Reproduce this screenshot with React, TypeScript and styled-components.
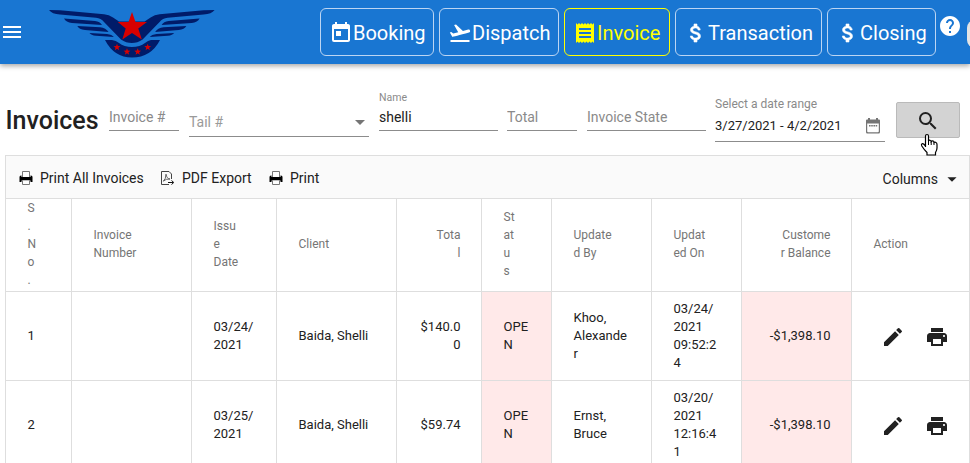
import styled, { createGlobalStyle, css } from 'styled-components'
import { FC, ReactNode, useState, ChangeEvent } from 'react'
import {
    MdArrowDropDown,
    MdAttachMoney,
    MdEdit,
    MdFlightTakeoff,
    MdHelp,
    MdMenu,
    MdPrint,
    MdReceipt,
    MdSearch,
    MdToday
} from 'react-icons/md'

const GlobalStyle = createGlobalStyle`
  * {
    box-sizing: border-box;
  }

  body {
    margin: 0;
    overflow: hidden;
    background: #fff;
    color: #212121;
    font-family: Roboto, 'Liberation Sans', sans-serif;
    font-size: 14px;
  }
`

const Page = styled.div`
  width: 970px;
  height: 463px;
  overflow: hidden;
`

const Header = styled.header`
  position: relative;
  display: flex;
  height: 64px;
  background: #1976d2;
  box-shadow: 0 2px 5px rgba(0, 0, 0, 0.35);
  color: #fff;
`

const MenuButton = styled.div`
  display: flex;
  flex: none;
  align-items: center;
  width: 49px;
`

const LogoBox = styled.div`
  flex: none;
  width: 271px;
  padding-top: 9px;
`

const Nav = styled.nav`
  display: flex;
  flex: none;
  gap: 5px;
  padding: 8px 0;
`

const NavButton = styled.a<{ $active?: boolean; $width: number }>`
  display: flex;
  align-items: center;
  width: ${({ $width }) => $width}px;
  height: 48px;
  padding: 2px 8px 0;
  border: 1px solid ${({ $active }) => ($active ? '#ffff00' : '#bcd5f3')};
  border-radius: 6px;
  color: ${({ $active }) => ($active ? '#ffff00' : '#fff')};
  font-size: 20px;
  white-space: nowrap;

  svg {
    flex: none;
  }
`

const DollarIcon = styled(MdAttachMoney)`
  path:last-child {
    stroke: currentColor;
    stroke-width: 0.6px;
  }
`

const Help = styled.div`
  display: flex;
  flex: none;
  width: 31px;
  padding: 14px 0 0 2px;

  svg {
    flex: none;
  }
`

const Avatar = styled.div`
  flex: none;
  width: 36px;
  height: 28px;
  margin-top: 20px;
  border-radius: 8px;
  background: #e4e4e4;
`

const Filters = styled.div`
  display: flex;
  align-items: flex-start;
  height: 91px;
  padding-left: 5px;
`

const Title = styled.h1`
  width: 104px;
  margin: 42px 0 0;
  padding-left: 0.5px;
  font-size: 25px;
  font-weight: 500;
  line-height: 30px;
`

const Field = styled.div<{ $width: number; $height: number; $gap: number }>`
  display: flex;
  flex-direction: column;
  justify-content: flex-end;
  flex: none;
  width: ${({ $width }) => $width}px;
  height: ${({ $height }) => $height}px;
  margin-right: ${({ $gap }) => $gap}px;
  border-bottom: 1px solid #8c8c8c;
`

const Label = styled.label<{ $size: number; $bottom?: number }>`
  margin-bottom: ${({ $bottom }) => $bottom || 0}px;
  color: #8a8a8a;
  font-size: ${({ $size }) => $size}px;
  line-height: 14px;
`

const inputText = css`
  color: #212121;
  font-family: inherit;
  line-height: 18px;
`

const Input = styled.input`
  ${inputText}
  width: 100%;
  height: 18px;
  margin: 0 0 4px;
  padding: 0;
  border: 0;
  outline: 0;
  background: none;
  font-size: 14px;

  &::placeholder {
    color: #8a8a8a;
    opacity: 1;
  }
`

const Select = styled.div`
  display: flex;
  align-items: center;
  justify-content: space-between;
  height: 18px;
  margin-bottom: 5px;
  color: #9a9a9a;

  svg {
    margin-right: -3px;
    color: #757575;
  }
`

const DateValue = styled.div`
  ${inputText}
  display: flex;
  align-items: center;
  justify-content: space-between;
  height: 18px;
  margin: 6px 5px 6px 0;
  font-size: 13px;
`

const SearchButton = styled.button`
  position: relative;
  display: flex;
  align-items: center;
  justify-content: center;
  width: 64px;
  height: 36px;
  margin-top: 38px;
  padding: 2px 0 0;
  border: 1px solid #bababa;
  border-radius: 2px;
  background: #d3d3d3;
  color: #212121;
`

const Pointer = styled.svg`
  position: absolute;
  top: 30px;
  left: 23px;
`

const Grid = styled.section`
  width: 965px;
  margin-left: 5px;
  border: 1px solid #dedede;
`

const Toolbar = styled.div`
  display: flex;
  align-items: center;
  height: 43px;
  padding: 2px 8px 0 13px;
  border-bottom: 1px solid #dedede;
  background: #fafafa;
`

const Tool = styled.div<{ $width: number }>`
  display: flex;
  align-items: center;
  gap: 7px;
  width: ${({ $width }) => $width}px;
  line-height: 18px;
  white-space: nowrap;
`

const Columns = styled.div`
  display: flex;
  align-items: center;
  margin-left: auto;
  padding-top: 2px;

  svg {
    margin: 0 -2px 0 3px;
  }
`

const Row = styled.div<{ $height: number }>`
  display: grid;
  grid-template-columns: 66px 120px 85px 120px 85px 70px 100px 90px 110px 117px;
  height: ${({ $height }) => $height}px;
  border-bottom: 1px solid #dedede;
`

const Cell = styled.div<{ $head?: boolean; $right?: boolean; $alert?: boolean }>`
  display: flex;
  align-items: center;
  justify-content: ${({ $right }) => ($right ? 'flex-end' : 'flex-start')};
  padding: 0 20.5px ${({ $head }) => ($head ? 2 : 0)}px 21.5px;
  border-right: 1px solid #dedede;
  background: ${({ $alert }) => ($alert ? '#ffe9e9' : 'none')};
  color: ${({ $head }) => ($head ? '#757575' : '#212121')};
  font-size: ${({ $head }) => ($head ? 12 : 13)}px;
  line-height: 18px;
  text-align: ${({ $right }) => ($right ? 'right' : 'left')};
  white-space: pre;

  &:last-child {
    border-right: 0;
  }
`

const Actions = styled.div`
  display: flex;
  gap: 20px;
  padding: 2px 0 0 7.5px;

  svg {
    flex: none;
  }
`

const star = (cx: number, cy: number, r: number) =>
    Array.from({ length: 10 }, (_, i) => {
        const radius = i % 2 ? r * 0.42 : r
        const angle = (Math.PI / 5) * i - Math.PI / 2
        return `${cx + radius * Math.cos(angle)},${cy + radius * Math.sin(angle)}`
    }).join(' ')

const Wing: FC = () => (
    <g>
        <path d='M49 10 L60 10.3 L104 14.3 Q109 14.8 113 17.5 L119 21.5 H132 V43 Q126 43 121 39.5 L104 22 Q101 18.2 96 17.7 L60 14.6 Q52 14 49 10Z' />
        <path d='M64 18.4 L95 21 Q100 21.5 102 25 L72 22.9 Q66 22 64 18.4Z' />
        <path d='M77.3 26 L100 27.3 Q106 28 108.5 32 L85 30 Q79 29.3 77.3 26Z' />
        <path d='M89.5 33 L107 34 Q112 34.5 113.8 37 L96 35.8 Q91 35.3 89.5 33Z' />
    </g>
)

const Logo: FC = () => (
    <svg width='166' height='50' viewBox='49 9 166 50' fill='#001b69'>
        <Wing />
        <g transform='translate(263.6 0) scale(-1 1)'>
            <Wing />
        </g>
        <path d='M105 40 H112 Q116 40.3 119 43 Q124 47 132 47 Q140 47 145 43 Q148 40.3 151 40 H160 Q151 57.5 132 57.5 Q114 57.5 105 40Z' />
        <g fill='#d80000'>
            <path d='M132 12 L135.5 22 H147 L138.3 28.5 L141.8 39.6 L132 33 L122.3 39.6 L125.7 28.5 L117.8 22 H128.5Z' />
            <polygon points={star(117, 47.3, 3.6)} />
            <polygon points={star(127, 51.8, 3.6)} />
            <polygon points={star(137.7, 51.8, 3.6)} />
            <polygon points={star(147.7, 47.3, 3.6)} />
        </g>
    </svg>
)

const PrinterIcon: FC = () => (
    <svg width='14' height='14' viewBox='0 0 14 14'>
        <path d='M3.5 6V0.5H10.5V6' fill='#fff' stroke='#777' />
        <path d='M0.5 6Q0.5 4.5 2 4.5H2.5V6H11.5V4.5H12Q13.5 4.5 13.5 6V11H11.5V9.5H2.5V11H0.5Z' fill='#000' />
        <path d='M3.5 9.5V13.5H10.5V9.5' fill='#fff' stroke='#777' />
    </svg>
)

const PdfIcon: FC = () => (
    <svg width='14' height='14' viewBox='0 0 14 14' fill='none' stroke='#444'>
        <path d='M10.5 8V3L8 0.5H0.5V13.5H8' />
        <path d='M2.3 10.2Q5 8 5 3.2Q5.8 7.8 9 8Q5 7.6 2.3 10.2' strokeWidth='0.8' />
        <path d='M7 11.5H12M10.5 9.5L12.8 11.5L10.5 13.5' stroke='#111' />
    </svg>
)

const CalendarIcon: FC = () => (
    <svg width='14' height='16' viewBox='0 0 14 16' fill='#757575'>
        <path
            d='M2 0H4V1.5H10V0H12V1.5H13Q14 1.5 14 2.5V14Q14 15.5 12.7 15.5H1.3Q0 15.5 0 14V2.5Q0 1.5 1 1.5H2ZM1.2 5.5V13.3Q1.2 14.3 2.2 14.3H11.8Q12.8 14.3 12.8 13.3V5.5Z'
            fillRule='evenodd'
        />
        <path d='M3 7H4.6V8.5H3ZM5.2 7H6.8V8.5H5.2ZM7.4 7H9V8.5H7.4ZM9.6 7H11.2V8.5H9.6Z' />
    </svg>
)

const nav: { name: string; width: number; icon: ReactNode }[] = [
    { name: 'Booking', width: 114, icon: <MdToday size={24} /> },
    { name: 'Dispatch', width: 120, icon: <MdFlightTakeoff size={24} /> },
    { name: 'Invoice', width: 106, icon: <MdReceipt size={24} /> },
    { name: 'Transaction', width: 147, icon: <DollarIcon size={24} /> },
    { name: 'Closing', width: 109, icon: <DollarIcon size={24} /> }
]

const columns = [
    { title: 'S\n.\nN\no\n.' },
    { title: 'Invoice\nNumber' },
    { title: 'Issu\ne\nDate' },
    { title: 'Client' },
    { title: 'Tota\nl', right: true },
    { title: 'St\nat\nu\ns', alert: true },
    { title: 'Update\nd By' },
    { title: 'Updat\ned On' },
    { title: 'Custome\nr Balance', right: true, alert: true },
    { title: 'Action' }
]

const invoices = [
    ['1', '', '03/24/\n2021', 'Baida, Shelli', '$140.0\n0', 'OPE\nN', 'Khoo,\nAlexande\nr', '03/24/\n2021\n09:52:2\n4', '-$1,398.10'],
    ['2', '', '03/25/\n2021', 'Baida, Shelli', '$59.74', 'OPE\nN', 'Ernst,\nBruce', '03/20/\n2021\n12:16:4\n1', '-$1,398.10']
]

const App: FC = () => {
    const [name, setName] = useState<string>('shelli')

    return (
        <Page>
            <GlobalStyle />
            <Header>
                <MenuButton>
                    <MdMenu size={24} />
                </MenuButton>
                <LogoBox>
                    <Logo />
                </LogoBox>
                <Nav>
                    {nav.map((item) => (
                        <NavButton key={item.name} $width={item.width} $active={item.name === 'Invoice'}>
                            {item.icon}
                            {item.name}
                        </NavButton>
                    ))}
                </Nav>
                <Help>
                    <MdHelp size={24} />
                </Help>
                <Avatar />
            </Header>
            <Filters>
                <Title>Invoices</Title>
                <Field $width={70} $height={67} $gap={10}>
                    <Input placeholder='Invoice #' />
                </Field>
                <Field $width={180} $height={73} $gap={10}>
                    <Select>
                        Tail #
                        <MdArrowDropDown size={24} />
                    </Select>
                </Field>
                <Field $width={119} $height={67} $gap={9}>
                    <Label $size={10.5} $bottom={3}>Name</Label>
                    <Input
                        value={name}
                        onChange={(e: ChangeEvent<HTMLInputElement>) => setName(e.target.value)}
                    />
                </Field>
                <Field $width={70} $height={67} $gap={10}>
                    <Input placeholder='Total' />
                </Field>
                <Field $width={119} $height={67} $gap={9}>
                    <Input placeholder='Invoice State' />
                </Field>
                <Field $width={170} $height={78} $gap={11}>
                    <Label $size={12}>Select a date range</Label>
                    <DateValue>
                        3/27/2021 - 4/2/2021
                        <CalendarIcon />
                    </DateValue>
                </Field>
                <SearchButton>
                    <MdSearch size={24} />
                    <Pointer width='19' height='24' viewBox='0 0 19 24'>
                        <path
                            d='M5.5 14V3Q5.5 1.5 7 1.5T8.5 3V8Q9 6.8 10.2 7.2Q11.2 7.5 11.2 8.5Q12 7.6 13.2 8Q14 8.4 14 9.5Q15 8.9 16 9.5Q17 10 17 11.5V15Q17 17 15.5 19.5V22H7V19.5Q4 16.5 1.8 13Q1 11.4 2 10.8Q3.3 10.3 5.5 13Z'
                            fill='#fff'
                            stroke='#000'
                            strokeWidth='1.2'
                        />
                        <path d='M8.5 8V12M11.2 8.5V12M14 9.5V12' stroke='#000' fill='none' />
                    </Pointer>
                </SearchButton>
            </Filters>
            <Grid>
                <Toolbar>
                    <Tool $width={142}>
                        <PrinterIcon />
                        Print All Invoices
                    </Tool>
                    <Tool $width={108}>
                        <PdfIcon />
                        PDF Export
                    </Tool>
                    <Tool $width={60}>
                        <PrinterIcon />
                        Print
                    </Tool>
                    <Columns>
                        Columns
                        <MdArrowDropDown size={22} />
                    </Columns>
                </Toolbar>
                <Row $height={93}>
                    {columns.map((column) => (
                        <Cell key={column.title} $head $right={column.right}>
                            {column.title}
                        </Cell>
                    ))}
                </Row>
                {invoices.map((invoice) => (
                    <Row key={invoice[0]} $height={89}>
                        {invoice.map((value, i) => (
                            <Cell key={i} $right={columns[i].right} $alert={columns[i].alert}>
                                {value}
                            </Cell>
                        ))}
                        <Cell>
                            <Actions>
                                <MdEdit size={24} />
                                <MdPrint size={24} />
                            </Actions>
                        </Cell>
                    </Row>
                ))}
            </Grid>
        </Page>
    )
}

export default App
